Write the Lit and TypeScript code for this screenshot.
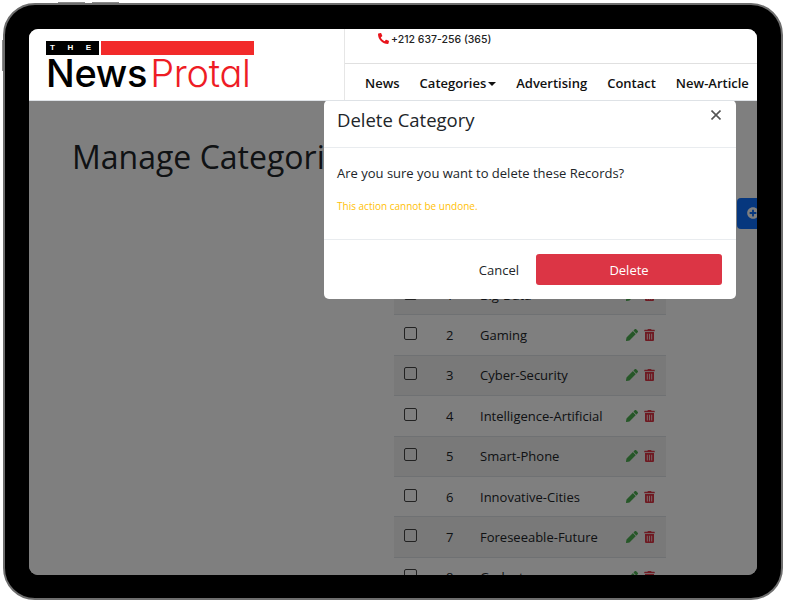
import { LitElement, html, css, svg } from 'lit';
import { customElement } from 'lit/decorators.js';

const categories = [
  'Big-Data',
  'Gaming',
  'Cyber-Security',
  'Intelligence-Artificial',
  'Smart-Phone',
  'Innovative-Cities',
  'Foreseeable-Future',
  'Gadget',
];

const navLinks = ['News', 'Categories', 'Advertising', 'Contact', 'New-Article'];

const pencil = svg`<path d="M497.9 142.1l-46.1 46.1c-4.7 4.7-12.3 4.7-17 0l-111-111c-4.7-4.7-4.7-12.3 0-17l46.1-46.1c18.7-18.7 49.1-18.7 67.9 0l60.1 60.1c18.8 18.7 18.8 49.1 0 67.9zM284.2 99.8L21.6 362.4.4 483.9c-2.9 16.4 11.4 30.6 27.8 27.8l121.5-21.3 262.6-262.6c4.7-4.7 4.7-12.3 0-17l-111-111c-4.8-4.7-12.4-4.7-17.1 0z"/>`;
const trash = svg`<path d="M32 464a48 48 0 0 0 48 48h288a48 48 0 0 0 48-48V128H32zm272-256a16 16 0 0 1 32 0v224a16 16 0 0 1-32 0zm-96 0a16 16 0 0 1 32 0v224a16 16 0 0 1-32 0zm-96 0a16 16 0 0 1 32 0v224a16 16 0 0 1-32 0zM432 32H312l-9.4-18.7A24 24 0 0 0 281.1 0H166.8a23.72 23.72 0 0 0-21.4 13.3L136 32H16A16 16 0 0 0 0 48v32a16 16 0 0 0 16 16h416a16 16 0 0 0 16-16V48a16 16 0 0 0-16-16z"/>`;
const phone = svg`<path d="M493.4 24.6l-104-24c-11.3-2.6-22.9 3.3-27.5 13.9l-48 112c-4.2 9.8-1.4 21.3 6.9 28l60.6 49.6c-36 76.7-98.9 140.5-177.2 177.2l-49.6-60.6c-6.8-8.3-18.2-11.1-28-6.9l-112 48C3.9 366.5-2 378.1.6 389.4l24 104C27.1 504.2 36.7 512 48 512c256.1 0 464-207.5 464-464 0-11.2-7.7-20.9-18.6-23.4z"/>`;
const plusCircle = svg`<path d="M256 8C119 8 8 119 8 256s111 248 248 248 248-111 248-248S393 8 256 8zm144 276c0 6.6-5.4 12-12 12h-92v92c0 6.6-5.4 12-12 12h-56c-6.6 0-12-5.4-12-12v-92h-92c-6.6 0-12-5.4-12-12v-56c0-6.6 5.4-12 12-12h92v-92c0-6.6 5.4-12 12-12h56c6.6 0 12 5.4 12 12v92h92c6.6 0 12 5.4 12 12v56z"/>`;

@customElement('app-root')
export class AppRoot extends LitElement {
  static styles = css`
    :host {
      display: block;
      width: 786px;
      height: 603px;
      background: #fff;
      font-family: 'Open Sans', 'Noto Sans', sans-serif;
      color: #212529;
    }

    .stage {
      box-sizing: border-box;
      width: 786px;
      height: 603px;
      padding: 3px 3px 3px 3px;
      position: relative;
    }

    .device {
      box-sizing: border-box;
      height: 100%;
      background: #000;
      border: 2px solid #6e6e6e;
      border-radius: 32px;
      padding: 24px 24px 23px 24px;
    }

    .side-btn {
      position: absolute;
      background: #8a8a8a;
    }
    .side-btn.a { left: 58px; top: 2px; width: 27px; height: 1px; }
    .side-btn.b { left: 92px; top: 2px; width: 27px; height: 1px; }
    .side-btn.c { left: 2px; top: 40px; width: 1px; height: 31px; }

    .screen {
      position: relative;
      height: 100%;
      border-radius: 9px;
      overflow: hidden;
      background: #fff;
      display: flex;
      flex-direction: column;
    }

    header {
      position: relative;
      z-index: 3;
      flex: none;
      display: flex;
      height: 72px;
      box-sizing: border-box;
      background: #fff;
      border-bottom: 1px solid #dee2e6;
    }

    .brand {
      box-sizing: border-box;
      width: 316px;
      flex: none;
      padding: 12px 0 0 17px;
      border-right: 1px solid #e6e6e6;
    }

    .brand-top {
      display: flex;
      gap: 2px;
      height: 14px;
    }
    .the {
      box-sizing: border-box;
      width: 53px;
      background: #000;
      color: #fff;
      font: 700 8px/14px 'Liberation Sans', sans-serif;
      display: flex;
      justify-content: space-between;
      padding: 0 6px 0 4px;
    }
    .the span:last-child { margin-right: 2px; }
    .red-bar {
      width: 153px;
      background: #f22a2a;
    }
    .brand-name {
      font-family: Inter, sans-serif;
      font-feature-settings: 'cv11';
      font-size: 38px;
      line-height: 36px;
      letter-spacing: -0.3px;
      white-space: nowrap;
      color: #000;
      font-weight: 500;
    }
    .brand-name b {
      font-weight: 300;
      color: #ee1c25;
      margin-left: 3px;
    }

    .top-right {
      flex: 1;
      display: flex;
      flex-direction: column;
    }
    .contact {
      flex: none;
      box-sizing: border-box;
      height: 35px;
      border-bottom: 1px solid #e0e0e0;
      padding: 3px 0 0 33px;
      display: flex;
      align-items: flex-start;
      gap: 2px;
      font: 500 10.5px/15px Inter, sans-serif;
      color: #222;
    }
    .contact svg {
      width: 11px;
      height: 11px;
      fill: #e8141c;
      transform: scaleX(-1);
      margin-top: 1px;
    }

    nav {
      flex: 1;
      display: flex;
      align-items: center;
      gap: 20px;
      padding: 2px 0 0 20px;
      font-size: 13px;
      font-weight: 600;
      color: #111;
      white-space: nowrap;
    }
    .caret::after {
      content: '';
      display: inline-block;
      margin-left: 2px;
      vertical-align: 2px;
      border-top: 4px solid #111;
      border-left: 4px solid transparent;
      border-right: 4px solid transparent;
    }

    main {
      flex: 1;
      min-height: 0;
      padding: 32px 0 0 43px;
    }

    h1 {
      margin: 0;
      font-size: 32px;
      font-weight: 400;
      line-height: 48px;
      color: #212529;
      white-space: nowrap;
    }

    .toolbar {
      display: flex;
      justify-content: flex-end;
      margin-top: 17px;
    }
    .add {
      width: 60px;
      height: 31px;
      margin-right: -40px;
      box-sizing: border-box;
      padding: 9px 0 0 10px;
      background: #0d6efd;
      border-radius: 4px;
      flex: none;
      transform: translateX(0);
    }
    .add svg {
      display: block;
      width: 12px;
      height: 12px;
      fill: #fff;
    }

    .table {
      margin: 45px 0 0 322px;
      width: 272px;
      font-size: 13px;
    }
    .row {
      box-sizing: border-box;
      height: 40.4px;
      display: grid;
      grid-template-columns: 42px 34px 146px auto;
      align-items: center;
      padding-left: 10px;
      border-top: 1px solid #dee2e6;
    }
    .row:nth-child(odd) {
      background: #f2f2f2;
    }
    .check {
      box-sizing: border-box;
      width: 13px;
      height: 13px;
      border: 1px solid #444;
      border-radius: 2px;
      margin-top: -3px;
    }
    .actions {
      display: flex;
      align-items: center;
      gap: 6px;
    }
    .actions svg {
      height: 12px;
      display: block;
    }
    .actions .edit { width: 12px; fill: #4caf50; }
    .actions .del { width: 11px; fill: #dc3545; }

    .backdrop {
      position: absolute;
      inset: 0;
      z-index: 1;
      background: rgba(0, 0, 0, 0.5);
    }

    .modal {
      position: absolute;
      z-index: 2;
      left: 295px;
      top: 71px;
      width: 412px;
      height: 199px;
      box-sizing: border-box;
      background: #fff;
      border-radius: 5px;
      display: flex;
      flex-direction: column;
    }
    .modal-head {
      position: relative;
      height: 48px;
      box-sizing: border-box;
      border-bottom: 1px solid #e9ecef;
      padding: 6px 13px 0;
      font-size: 18.5px;
      line-height: 28px;
      color: #212529;
    }
    .close {
      position: absolute;
      right: 15px;
      top: 10px;
      width: 10px;
      height: 10px;
      stroke: #555;
      stroke-width: 1.6;
    }
    .modal-body {
      flex: 1;
      box-sizing: border-box;
      border-bottom: 1px solid #e9ecef;
      padding: 15px 13px 0;
      font-size: 13px;
      line-height: 20px;
    }
    .warn {
      margin-top: 16px;
      font-size: 10px;
      line-height: 15px;
      color: #ffc107;
    }
    .modal-foot {
      flex: none;
      height: 59px;
      box-sizing: border-box;
      padding: 14px 14px 0 0;
      display: flex;
      justify-content: flex-end;
      align-items: flex-start;
      gap: 17px;
      font-size: 13px;
    }
    .cancel {
      line-height: 32px;
    }
    .delete {
      width: 186px;
      height: 31px;
      line-height: 32px;
      text-align: center;
      color: #fff;
      background: #dc3545;
      border-radius: 3px;
    }
  `;

  render() {
    return html`
      <div class="stage">
        <div class="device">
          <div class="screen">
            <header>
              <div class="brand">
                <div class="brand-top">
                  <div class="the"><span>T</span><span>H</span><span>E</span></div>
                  <div class="red-bar"></div>
                </div>
                <div class="brand-name">News<b>Protal</b></div>
              </div>
              <div class="top-right">
                <div class="contact">
                  <svg viewBox="0 0 512 512">${phone}</svg>
                  <span>+212 637-256 (365)</span>
                </div>
                <nav>
                  ${navLinks.map(
                    (l) => html`<span class=${l === 'Categories' ? 'caret' : ''}>${l}</span>`
                  )}
                </nav>
              </div>
            </header>
            <main>
              <h1>Manage Categories</h1>
              <div class="toolbar">
                <div class="add"><svg viewBox="0 0 512 512">${plusCircle}</svg></div>
              </div>
              <div class="table">
                ${categories.map(
                  (name, i) => html`
                    <div class="row">
                      <div class="check"></div>
                      <div>${i + 1}</div>
                      <div>${name}</div>
                      <div class="actions">
                        <svg class="edit" viewBox="0 0 512 512">${pencil}</svg>
                        <svg class="del" viewBox="0 0 448 512">${trash}</svg>
                      </div>
                    </div>
                  `
                )}
              </div>
            </main>
            <div class="backdrop"></div>
            <div class="modal">
              <div class="modal-head">
                Delete Category
                <svg class="close" viewBox="0 0 10 10"><path d="M0.5 0.5L9.5 9.5M9.5 0.5L0.5 9.5" /></svg>
              </div>
              <div class="modal-body">
                Are you sure you want to delete these Records?
                <div class="warn">This action cannot be undone.</div>
              </div>
              <div class="modal-foot">
                <div class="cancel">Cancel</div>
                <div class="delete">Delete</div>
              </div>
            </div>
          </div>
        </div>
        <i class="side-btn a"></i><i class="side-btn b"></i><i class="side-btn c"></i>
      </div>
    `;
  }
}

declare global {
  interface HTMLElementTagNameMap {
    'app-root': AppRoot;
  }
}
